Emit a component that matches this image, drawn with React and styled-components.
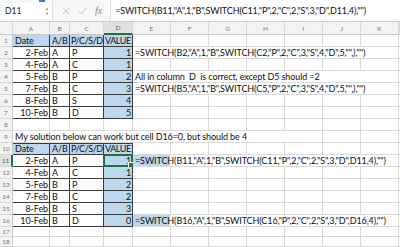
import React from "react";
import styled, { createGlobalStyle, css } from "styled-components";

const GREEN = "#217346";
const BLUE = "#bdd7ee";
const GRID = "#d9d9d9";
const DARK = "#3a3a3a";
const COLS = "13px 37px 20px 34px 29px repeat(7, 38px) 1fr";

const Global = createGlobalStyle`
  html, body { margin: 0; padding: 0; background: #fff; }
  body { font-family: Lato, "Open Sans", sans-serif; overflow: hidden; }
  * { box-sizing: border-box; }
`;

const Page = styled.div`
  width: 400px;
  height: 247px;
  overflow: hidden;
  position: relative;
  background: #fff;
`;

const RibbonMark = styled.span`
  position: absolute;
  left: 39px;
  top: 0;
  width: 6px;
  height: 2px;
  background: #3b7dd8;
`;

const FormulaBar = styled.div`
  height: 22px;
  display: flex;
  align-items: center;
  border-bottom: 1px solid #cfcfcf;
  background: #f7f7f7;
`;

const NameBox = styled.div`
  width: 50px;
  height: 16px;
  margin-left: 2px;
  display: flex;
  align-items: center;
  justify-content: space-between;
  padding: 0 3px;
  font-size: 8.5px;
  color: #222;
  background: #fff;
`;

const Spinner = styled.span`
  display: flex;
  flex-direction: column;
  font-size: 4px;
  line-height: 5px;
  color: #888;
`;

const BarIcons = styled.div`
  display: flex;
  align-items: center;
  gap: 8px;
  padding: 0 8px 0 9px;
  height: 100%;
  border-left: 1px solid #e2e2e2;
`;

const Fx = styled.span`
  font-family: "Liberation Serif", serif;
  font-style: italic;
  font-size: 10px;
  color: #8a8a8a;
`;

const FormulaInput = styled.div`
  flex: 1;
  height: 100%;
  display: flex;
  align-items: center;
  padding-left: 4px;
  background: #fff;
  border-left: 1px solid #e2e2e2;
  font-size: 9px;
  letter-spacing: -0.1px;
  color: #111;
  white-space: nowrap;
  overflow: hidden;
`;

const Row = styled.div`
  display: grid;
  grid-template-columns: ${COLS};
  height: ${(p) => p.$h || 12}px;
`;

const HeadCell = styled.div`
  background: ${(p) => (p.$active ? "#e1e1e1" : "#f3f3f3")};
  color: ${(p) => (p.$active ? GREEN : "#777")};
  border-right: 1px solid ${GRID};
  border-bottom: ${(p) => (p.$active ? `2px solid ${GREEN}` : `1px solid #c9c9c9`)};
  font-size: 6.5px;
  display: flex;
  align-items: center;
  justify-content: center;
`;

const RowHead = styled.div`
  background: ${(p) => (p.$active ? "#e1e1e1" : "#f3f3f3")};
  color: ${(p) => (p.$active ? GREEN : "#777")};
  border-right: ${(p) => (p.$active ? `2px solid ${GREEN}` : `1px solid #c9c9c9`)};
  border-bottom: 1px solid ${GRID};
  font-size: 6.5px;
  display: flex;
  align-items: center;
  justify-content: center;
`;

const Cell = styled.div`
  position: relative;
  border-right: 1px solid ${(p) => (p.$box ? DARK : GRID)};
  border-bottom: 1px solid ${(p) => (p.$box ? DARK : GRID)};
  background: ${(p) => (p.$fill ? BLUE : "#fff")};
  font-size: 9px;
  letter-spacing: ${(p) => (p.$tight ? "-0.45px" : "-0.1px")};
  color: #111;
  padding: 0 1px 0 ${(p) => (p.$tight ? 1 : 2)}px;
  display: flex;
  align-items: center;
  justify-content: ${(p) => (p.$right ? "flex-end" : "flex-start")};
  white-space: pre;
  ${(p) =>
    p.$top &&
    css`
      box-shadow: inset 0 1px 0 ${DARK};
    `}
  ${(p) =>
    p.$span &&
    css`
      grid-column: span ${p.$span};
      overflow: visible;
    `}
  ${(p) =>
    p.$leadFill &&
    css`
      background: linear-gradient(to right, ${BLUE} 37px, #fff 37px);
    `}
`;

const Active = styled.span`
  position: absolute;
  left: -1px;
  top: -1px;
  right: -1px;
  bottom: -1px;
  border: 2px solid ${GREEN};
  pointer-events: none;
  &::after {
    content: "";
    position: absolute;
    right: -3px;
    bottom: -3px;
    width: 4px;
    height: 4px;
    background: ${GREEN};
    border: 1px solid #fff;
  }
`;

const letters = ["A", "B", "C", "D", "E", "F", "G", "H", "I", "J", "K", ""];

const table1 = [
  ["2-Feb", "A", "P", "1"],
  ["4-Feb", "A", "C", "1"],
  ["5-Feb", "B", "P", "2"],
  ["7-Feb", "B", "C", "3"],
  ["8-Feb", "B", "S", "4"],
  ["10-Feb", "B", "D", "5"],
];
const table2 = [
  ["2-Feb", "A", "P", "1"],
  ["4-Feb", "A", "C", "1"],
  ["5-Feb", "B", "P", "2"],
  ["7-Feb", "B", "C", "2"],
  ["8-Feb", "B", "S", "3"],
  ["10-Feb", "B", "D", "0"],
];

const f2 = '=SWITCH(B2,"A",1,"B",SWITCH(C2,"P",2,"C",3,"S",4,"D",5,"",),"")';
const f5 = '=SWITCH(B5,"A",1,"B",SWITCH(C5,"P",2,"C",3,"S",4,"D",5,"",),"")';
const f11 = '=SWITCH(B11,"A",1,"B",SWITCH(C11,"P",2,"C",2,"S",3,"D",D11,4),"")';
const f16 = '=SWITCH(B16,"A",1,"B",SWITCH(C16,"P",2,"C",2,"S",3,"D",D16,4),"")';

function Blank({ n }) {
  return Array.from({ length: n }, (_, i) => <Cell key={"b" + i} />);
}

function HeaderRow({ n, top, h }) {
  return (
    <Row $h={h}>
      <RowHead>{n}</RowHead>
      {["Date", "A/B", "P/C/S/D", "VALUE"].map((t) => (
        <Cell key={t} $box $fill $top={top} $tight={t === "P/C/S/D" || t === "VALUE"}>
          {t}
        </Cell>
      ))}
      <Blank n={8} />
    </Row>
  );
}

function DataRow({ n, data, extra, extraFill, active, h }) {
  return (
    <Row $h={h}>
      <RowHead $active={active}>{n}</RowHead>
      <Cell $box $right>{data[0]}</Cell>
      <Cell $box>{data[1]}</Cell>
      <Cell $box>{data[2]}</Cell>
      <Cell $box $fill $right>
        {data[3]}
        {active && <Active />}
      </Cell>
      {extra ? (
        <>
          <Cell $span={7} $leadFill={extraFill}>{extra}</Cell>
          <Cell />
        </>
      ) : (
        <Blank n={8} />
      )}
    </Row>
  );
}

function EmptyRow({ n, h }) {
  return (
    <Row $h={h}>
      <RowHead>{n}</RowHead>
      <Blank n={12} />
    </Row>
  );
}

export default function App() {
  return (
    <Page>
      <Global />
      <FormulaBar>
        <NameBox>
          D11
          <Spinner>
            <span>▲</span>
            <span>▼</span>
          </Spinner>
        </NameBox>
        <BarIcons>
          <svg width="8" height="8" viewBox="0 0 8 8">
            <path d="M1 1L7 7M7 1L1 7" stroke="#c4c4c4" strokeWidth="1" />
          </svg>
          <svg width="9" height="8" viewBox="0 0 9 8">
            <path d="M1 4.5L3.5 7L8 1" stroke="#c4c4c4" strokeWidth="1" fill="none" />
          </svg>
          <Fx>fx</Fx>
        </BarIcons>
        <FormulaInput>{f11}</FormulaInput>
      </FormulaBar>
      <RibbonMark />
      <Row $h={13}>
        <HeadCell />
        {letters.map((l, i) => (
          <HeadCell key={i} $active={l === "D"}>
            {l}
          </HeadCell>
        ))}
      </Row>
      <HeaderRow n={1} />
      {table1.map((d, i) => (
        <DataRow
          key={i}
          n={i + 2}
          data={d}
          extra={i === 0 ? f2 : i === 2 ? "All in column  D  is correct, except D5 should =2" : i === 3 ? f5 : null}
        />
      ))}
      <EmptyRow n={8} />
      <Row>
        <RowHead>9</RowHead>
        <Cell $span={9}>My solution below can work but cell D16=0, but should be 4</Cell>
        <Blank n={3} />
      </Row>
      <HeaderRow n={10} top />
      {table2.map((d, i) => (
        <DataRow
          key={i}
          n={i + 11}
          data={d}
          active={i === 0}
          extra={i === 0 ? f11 : i === 5 ? f16 : null}
          extraFill={i === 0 || i === 5}
        />
      ))}
      <EmptyRow n={17} h={10} />
      <EmptyRow n={18} h={10} />
    </Page>
  );
}
